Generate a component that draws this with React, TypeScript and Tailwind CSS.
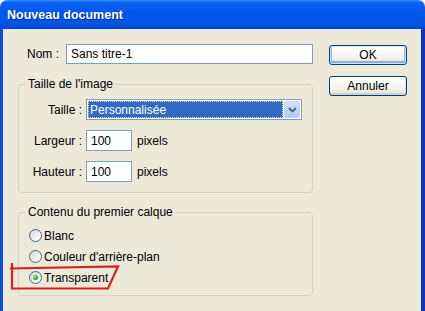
import React from "react";

function Radio({ checked, label }: { checked?: boolean; label: string }) {
  return (
    <div className="flex items-center h-[21px] pl-[10px]">
      <div className="w-[13px] h-[13px] rounded-full border border-[#3F6A92] bg-[linear-gradient(135deg,#D3D2CB_0%,#EEEDE7_50%,#FFFFFF_100%)] flex items-center justify-center shrink-0">
        {checked && (
          <div className="w-[5px] h-[5px] rounded-full bg-[radial-gradient(circle_at_35%_35%,#A8E8A0_0%,#3CB33C_45%,#1E8A1E_100%)]" />
        )}
      </div>
      <span className="ml-[2px] leading-[14px]">{label}</span>
    </div>
  );
}

function GroupBox({
  title,
  height,
  className,
  children,
}: {
  title: string;
  height: string;
  className?: string;
  children: React.ReactNode;
}) {
  return (
    <div className={`border border-[#D5D2C2] rounded-[4px] ${height} ${className ?? ""}`}>
      <div className="flex -mt-[8px] ml-[7px]">
        <span className="px-[2px] bg-[#ECE9D8] leading-[14px]">{title}</span>
      </div>
      {children}
    </div>
  );
}

function Button({ label, isDefault }: { label: string; isDefault?: boolean }) {
  return (
    <div
      className={`w-[78px] h-[20px] rounded-[3px] border border-[#003C74] bg-[linear-gradient(to_bottom,#FFFFFF_0%,#F4F3EE_60%,#E3E1D8_100%)] flex items-center justify-center leading-[14px] ${
        isDefault
          ? "shadow-[inset_0_0_0_1px_#CEE7FF,inset_0_-1px_0_2px_#89ADE4]"
          : "shadow-[inset_0_-2px_0_0_#D6D0C5,inset_-1px_0_0_0_#E2DED3]"
      }`}
    >
      {label}
    </div>
  );
}

export default function App() {
  return (
    <div className="w-[425px] h-[311px] bg-white relative overflow-hidden font-['Liberation_Sans',Arial,sans-serif] text-[12px] text-black">
      <div className="flex flex-col h-full">
        <div className="h-[29px] shrink-0 rounded-t-[7px] bg-[linear-gradient(to_bottom,#3B8CFF_0%,#0A61F2_10%,#0058EE_40%,#0055E6_80%,#0046CC_100%)] flex items-center pl-[7px]">
          <span className="text-white font-bold text-[12.5px] leading-[16px] [text-shadow:1px_1px_0_#0A2A8A]">
            Nouveau document
          </span>
        </div>
        <div className="flex-1 flex bg-[#ECE9D8] border-l-[3px] border-r-[4px] border-l-[#0B4ED9] border-r-[#0836C4]">
          <div className="w-[295px] ml-[15px] pt-[15px] shrink-0">
            <div className="flex items-center h-[20px]">
              <span className="w-[48px] pl-[9px] leading-[14px]">Nom :</span>
              <div className="w-[247px] h-[20px] border border-[#7F9DB9] bg-white flex items-center pl-[4px] leading-[14px]">
                Sans titre-1
              </div>
            </div>

            <GroupBox title="Taille de l'image" height="h-[109px]" className="mt-[20px]">
              <div className="mt-[8px] flex flex-col gap-[10px]">
                <div className="flex items-center h-[21px]">
                  <span className="w-[63px] text-right leading-[14px]">Taille :</span>
                  <div className="ml-[4px] w-[216px] h-[21px] border border-[#7F9DB9] bg-white flex items-center p-[1px]">
                    <div className="flex-1 h-full bg-[#316AC5] outline-1 outline-dotted outline-[#E8D88A] -outline-offset-1 text-white flex items-center pl-[2px] leading-[14px]">
                      Personnalisée
                    </div>
                    <div className="w-[16px] h-full ml-[1px] rounded-[2px] bg-[linear-gradient(to_bottom,#D2E0FD_0%,#C1D3FB_60%,#B4C8F6_100%)] border border-[#C3D3FD] flex items-center justify-center">
                      <svg width="9" height="6" viewBox="0 0 9 6">
                        <path d="M1 1 L4.5 4.5 L8 1" fill="none" stroke="#4D6185" strokeWidth="1.8" />
                      </svg>
                    </div>
                  </div>
                </div>
                <div className="flex items-center h-[21px]">
                  <span className="w-[63px] text-right leading-[14px]">Largeur :</span>
                  <div className="ml-[4px] w-[46px] h-[21px] border border-[#7F9DB9] bg-white flex items-center pl-[4px] leading-[14px]">
                    100
                  </div>
                  <span className="ml-[5px] leading-[14px]">pixels</span>
                </div>
                <div className="flex items-center h-[21px]">
                  <span className="w-[63px] text-right leading-[14px]">Hauteur :</span>
                  <div className="ml-[4px] w-[46px] h-[21px] border border-[#7F9DB9] bg-white flex items-center pl-[4px] leading-[14px]">
                    100
                  </div>
                  <span className="ml-[5px] leading-[14px]">pixels</span>
                </div>
              </div>
            </GroupBox>

            <GroupBox title="Contenu du premier calque" height="h-[84px]" className="mt-[19px]">
              <div className="mt-[6px] flex flex-col">
                <Radio label="Blanc" />
                <Radio label="Couleur d'arrière-plan" />
                <Radio label="Transparent" checked />
              </div>
            </GroupBox>
          </div>

          <div className="ml-[16px] pt-[16px] flex flex-col gap-[11px]">
            <Button label="OK" isDefault />
            <Button label="Annuler" />
          </div>
        </div>
      </div>

      <svg className="absolute inset-0 pointer-events-none" width="425" height="311" viewBox="0 0 425 311">
        <path
          d="M12 263 L12 288.5 L108 288.5 L118 266.5 L10 268.5"
          fill="none"
          stroke="#D42128"
          strokeWidth="2.2"
          strokeLinejoin="miter"
        />
      </svg>
    </div>
  );
}
